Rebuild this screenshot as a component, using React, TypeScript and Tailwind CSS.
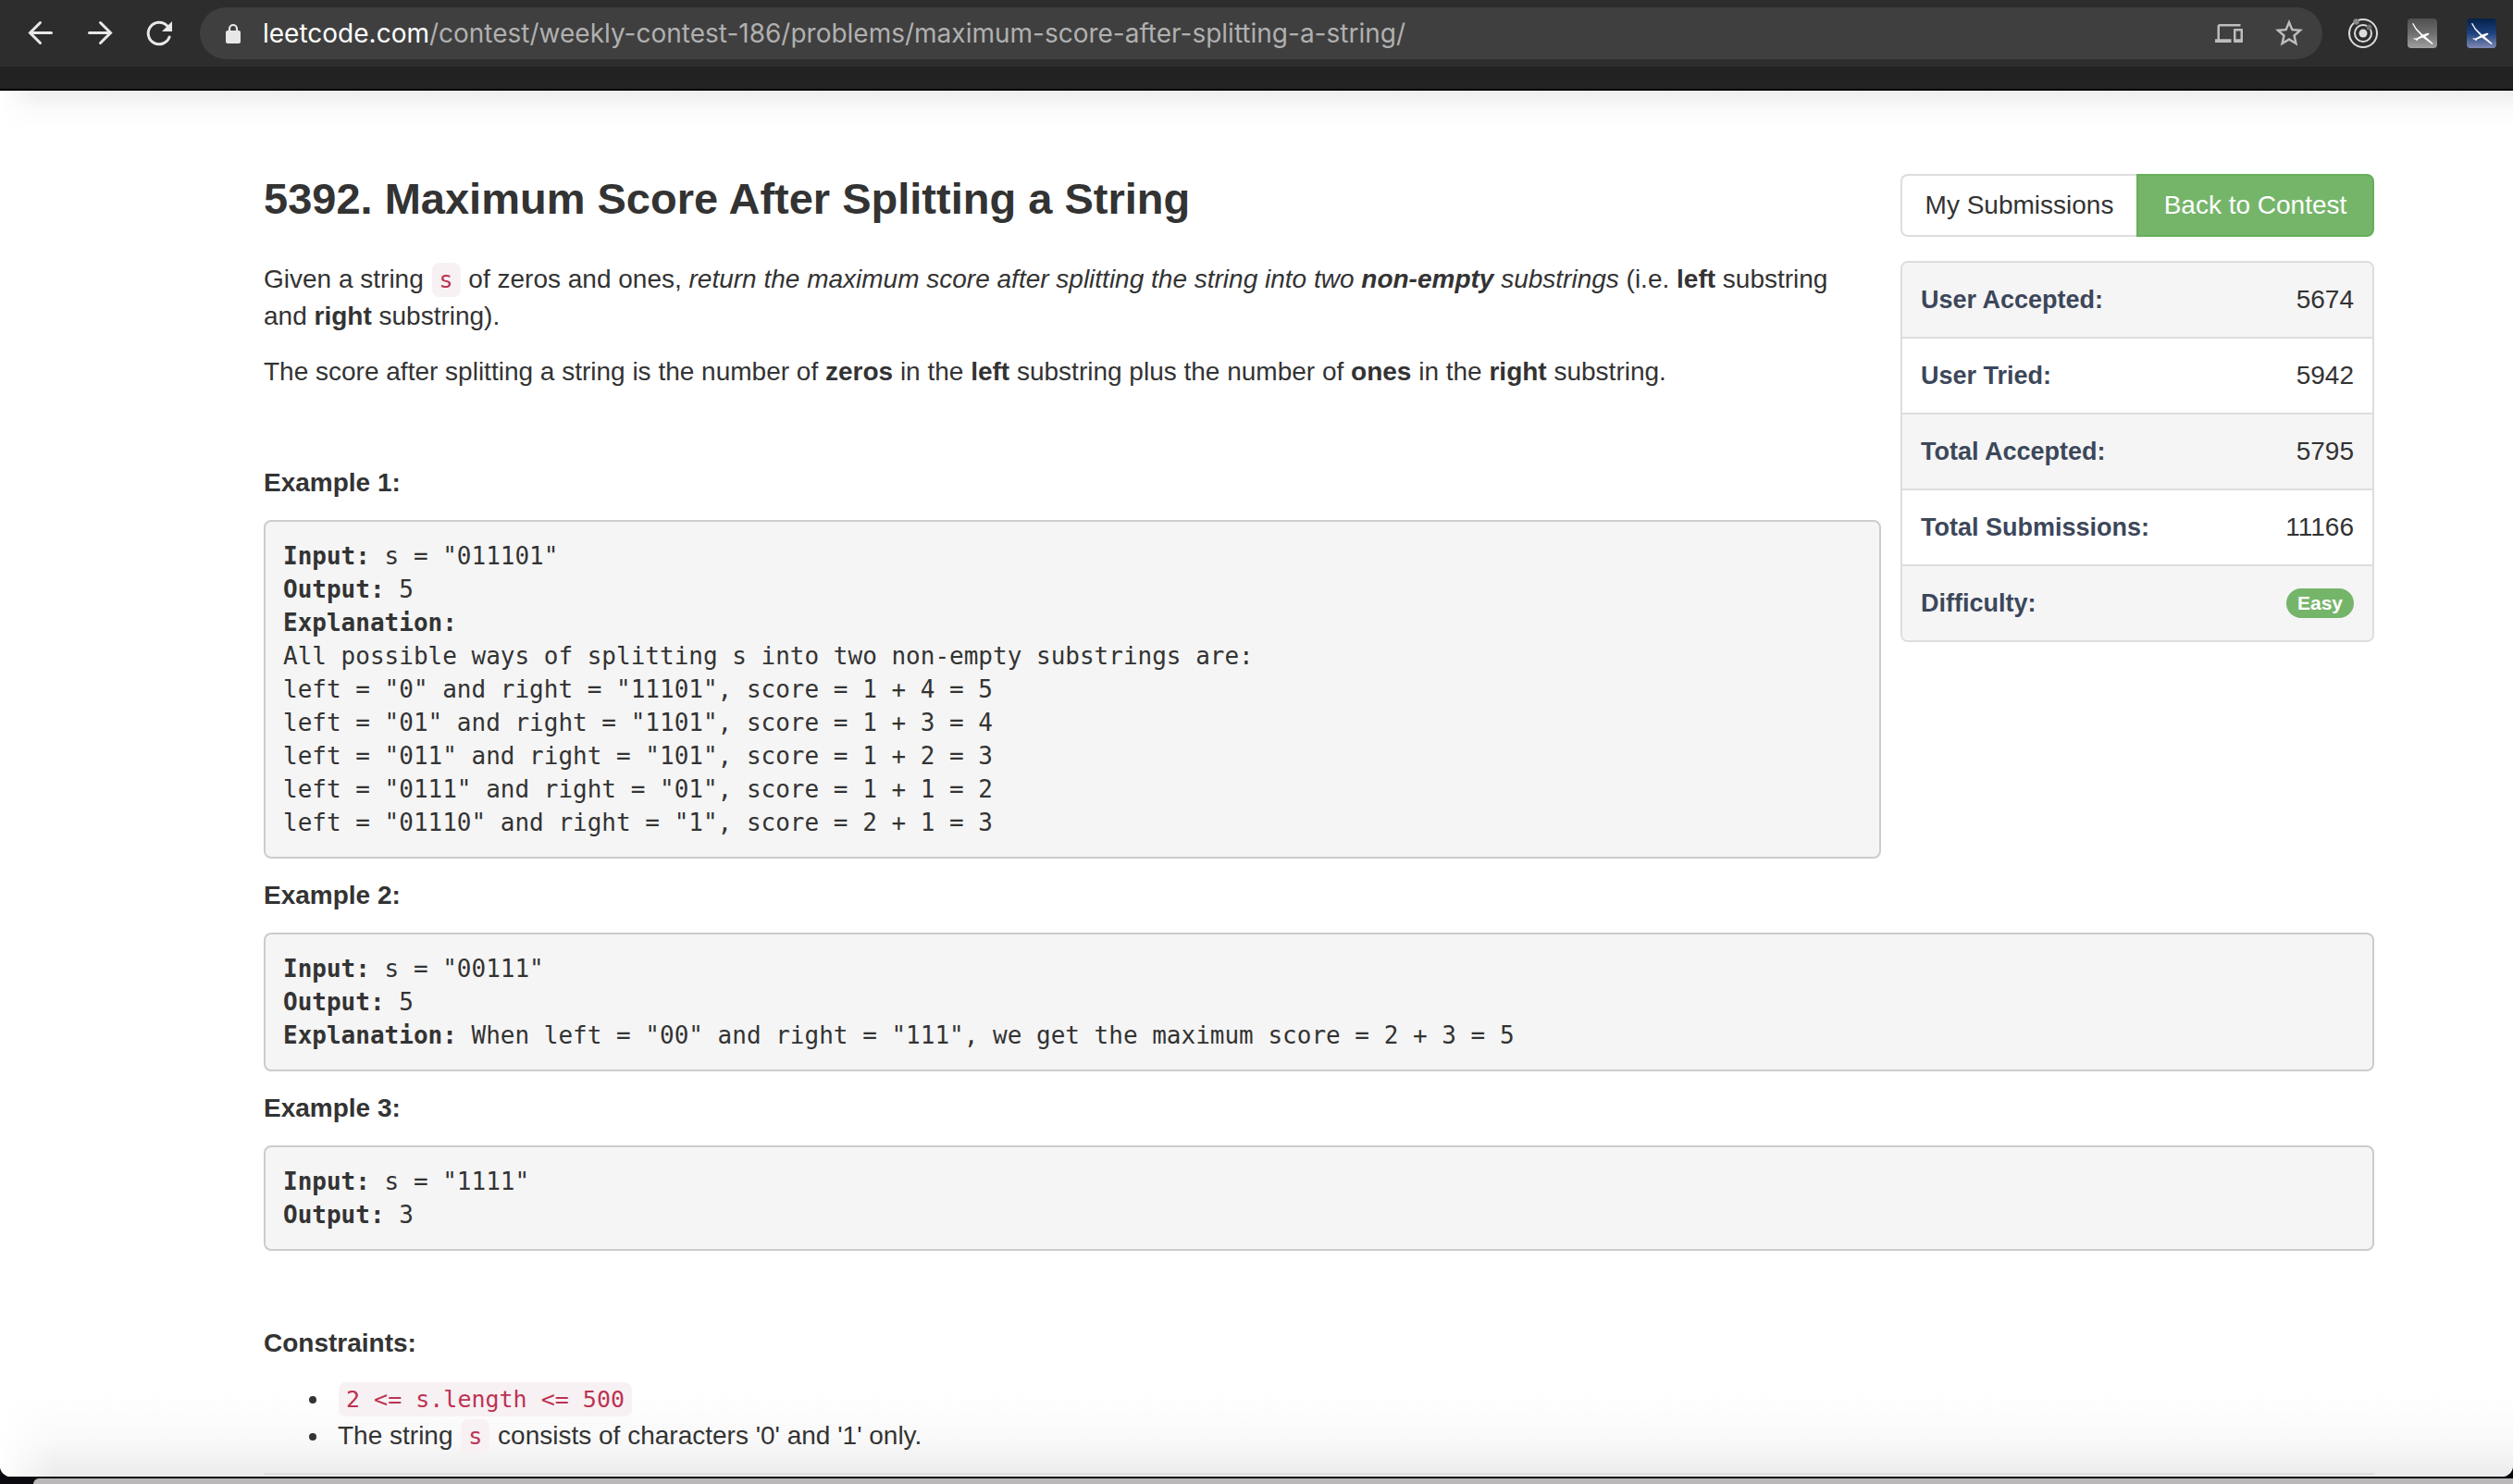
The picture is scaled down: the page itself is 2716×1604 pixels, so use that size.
import React from "react";
import { MdDevices, MdStarBorder } from "react-icons/md";

const stats: { label: string; value: string }[] = [
  { label: "User Accepted:", value: "5674" },
  { label: "User Tried:", value: "5942" },
  { label: "Total Accepted:", value: "5795" },
  { label: "Total Submissions:", value: "11166" },
];

function Code({ children }: { children: React.ReactNode }) {
  return (
    <code className="mx-px rounded-lg bg-[#f8f1f3] px-2 py-1 font-['DejaVu_Sans_Mono',monospace] text-[25px] leading-[30px] text-[#bd3353]">
      {children}
    </code>
  );
}

function Pre({ children }: { children: React.ReactNode }) {
  return (
    <pre className="mb-5 whitespace-pre-wrap rounded-lg border-2 border-[#ccc] bg-[#f5f5f5] p-[19px] font-['DejaVu_Sans_Mono',monospace] text-[26px] leading-9">
      {children}
    </pre>
  );
}

function Glider({ id, colors, label }: { id: string; colors: [string, string, string]; label: string }) {
  return (
    <button type="button" aria-label={label}>
      <svg width="32" height="32" viewBox="0 0 32 32">
        <defs>
          <linearGradient id={id} x1="0" y1="0" x2="0" y2="1">
            <stop offset="0" stopColor={colors[0]} />
            <stop offset="0.5" stopColor={colors[1]} />
            <stop offset="1" stopColor={colors[2]} />
          </linearGradient>
        </defs>
        <rect width="32" height="32" rx="4" fill={`url(#${id})`} />
        <path
          d="M5 5.500 6.200 5l3.300 5.400 7 7.200 5.300-1.800 1.700.2-.6 1.400-3.600 2.200 8.400 7.400-1 1-10.400-7.400-5 1.800-1.200 2.200-1.200-1.800-2-.2-.4-1.400 3 .2 5.400-2.800-6-6.600Z"
          fill="#fff"
        />
      </svg>
    </button>
  );
}

function Toolbar() {
  return (
    <header>
      <div className="flex h-[72px] items-center bg-[#2d2d2d] pl-[28px] pr-[18px]">
        <div className="flex gap-8 text-[#e8e8e8]">
          <button type="button" aria-label="Back">
            <svg width="32" height="32" viewBox="0 0 32 32" fill="none" stroke="currentColor" strokeWidth="3" strokeLinecap="round">
              <path d="M27.500 15.500H5M15.500 4.500 4.500 15.500l11 11" />
            </svg>
          </button>
          <button type="button" aria-label="Forward">
            <svg width="32" height="32" viewBox="0 0 32 32" fill="none" stroke="currentColor" strokeWidth="3" strokeLinecap="round">
              <path d="M4.500 15.500h22.500M16.500 4.500l11 11-11 11" />
            </svg>
          </button>
          <button type="button" aria-label="Reload">
            <svg width="32" height="32" viewBox="0 0 32 32" fill="none">
              <path d="M27.100 20A11.800 11.800 0 1 1 24.500 7.800" stroke="currentColor" strokeWidth="3" strokeLinecap="round" />
              <path d="M30 3v11H19Z" fill="currentColor" />
            </svg>
          </button>
        </div>
        <div className="ml-[28px] flex h-14 min-w-0 flex-1 items-center rounded-full bg-[#3f3f3f] pl-[27px] pr-[18px]">
          <svg className="shrink-0" width="18" height="24" viewBox="0 0 18 24">
            <rect x="1" y="9" width="16" height="14" rx="2" fill="#e8e8e8" />
            <path d="M5 10V7a4 4 0 0 1 8 0v3" fill="none" stroke="#e8e8e8" strokeWidth="2.200" />
          </svg>
          <p className="ml-[23px] min-w-0 flex-1 truncate font-[Inter,sans-serif] text-[28px] leading-10 text-[#b0b0b0]">
            <span className="text-white">leetcode.com</span>
            /contest/weekly-contest-186/problems/maximum-score-after-splitting-a-string/
          </p>
          <div className="flex items-center gap-8 text-[#bdbdbd]">
            <button type="button" aria-label="Send to your devices">
              <MdDevices size={30} />
            </button>
            <button type="button" aria-label="Bookmark this page">
              <MdStarBorder size={36} />
            </button>
          </div>
        </div>
        <div className="ml-7 flex items-center gap-8">
          <button type="button" aria-label="Orbit extension">
            <svg width="32" height="32" viewBox="0 0 32 32" fill="none">
              <circle cx="16" cy="16" r="15" stroke="#dcdcdc" strokeWidth="2" />
              <circle cx="16" cy="16" r="9" stroke="#dcdcdc" strokeWidth="2" />
              <circle cx="16" cy="16" r="4.500" fill="#dcdcdc" />
              <circle cx="8.500" cy="3.500" r="3.200" fill="#8a8a8a" />
              <circle cx="22.500" cy="9.500" r="3" fill="#6f6f6f" />
            </svg>
          </button>
          <Glider id="gray-sky" colors={["#505050", "#6e6e6e", "#a0a0a0"]} label="Glider extension" />
          <Glider id="blue-sky" colors={["#06204a", "#1d427e", "#8088b4"]} label="Glider extension (active)" />
        </div>
      </div>
      <div className="h-[26px] border-b-2 border-black bg-[#222]" />
    </header>
  );
}

export default function App() {
  return (
    <div className="min-h-screen bg-[#0a0a10]">
      <div className="overflow-hidden rounded-b-xl bg-white font-['Liberation_Sans',Arial,sans-serif] text-[28px] leading-10 text-[#333]">
        <Toolbar />
        <main className="bg-[linear-gradient(to_right,white,transparent_40px),linear-gradient(to_bottom,#eee,#fafafa_20px,white_42px)] pl-[285px] pr-[150px] pt-[90px]">
          <div className="flex gap-[21px]">
            <div className="min-w-0 flex-1">
              <h1 className="mb-10 text-[47px] font-bold leading-[54px]">5392. Maximum Score After Splitting a String</h1>
              <p className="mb-5 pr-5">
                Given a string <Code>s</Code> of zeros and ones,{" "}
                <em>
                  return the maximum score after splitting the string into two <strong>non-empty</strong> substrings
                </em>{" "}
                (i.e. <strong>left</strong> substring and <strong>right</strong> substring).
              </p>
              <p className="mb-20 pr-5">
                The score after splitting a string is the number of <strong>zeros</strong> in the <strong>left</strong>{" "}
                substring plus the number of <strong>ones</strong> in the <strong>right</strong> substring.
              </p>
              <p className="mb-5 font-bold">Example 1:</p>
              <Pre>
                <b>Input:</b>
                {' s = "011101"\n'}
                <b>Output:</b>
                {" 5\n"}
                <b>Explanation:</b>
                {`
All possible ways of splitting s into two non-empty substrings are:
left = "0" and right = "11101", score = 1 + 4 = 5
left = "01" and right = "1101", score = 1 + 3 = 4
left = "011" and right = "101", score = 1 + 2 = 3
left = "0111" and right = "01", score = 1 + 1 = 2
left = "01110" and right = "1", score = 2 + 1 = 3`}
              </Pre>
            </div>
            <aside className="w-[512px] shrink-0">
              <div className="mb-[26px] flex">
                <button type="button" className="h-[68px] flex-1 rounded-l-lg border-2 border-r-0 border-[#ddd] bg-white">
                  My Submissions
                </button>
                <button type="button" className="h-[68px] flex-1 rounded-r-lg border-2 border-[#68ae5c] bg-[#75b56a] text-white">
                  Back to Contest
                </button>
              </div>
              <dl className="divide-y-2 divide-[#ddd] overflow-hidden rounded-lg border-2 border-[#ddd]">
                {stats.map((s) => (
                  <div key={s.label} className="flex items-center justify-between px-5 py-5 odd:bg-[#f5f5f5]">
                    <dt className="text-[27px] font-bold text-[#3c475a]">{s.label}</dt>
                    <dd>{s.value}</dd>
                  </div>
                ))}
                <div className="flex items-center justify-between px-5 py-5 odd:bg-[#f5f5f5]">
                  <dt className="text-[27px] font-bold text-[#3c475a]">Difficulty:</dt>
                  <dd className="rounded-full bg-[#75b56a] px-3 text-[21px] font-bold leading-8 text-white">Easy</dd>
                </div>
              </dl>
            </aside>
          </div>
          <p className="mb-5 font-bold">Example 2:</p>
          <Pre>
            <b>Input:</b>
            {' s = "00111"\n'}
            <b>Output:</b>
            {" 5\n"}
            <b>Explanation:</b>
            {' When left = "00" and right = "111", we get the maximum score = 2 + 3 = 5'}
          </Pre>
          <p className="mb-5 font-bold">Example 3:</p>
          <Pre>
            <b>Input:</b>
            {' s = "1111"\n'}
            <b>Output:</b>
            {" 3"}
          </Pre>
          <p className="pb-5 pt-[60px] font-bold">Constraints:</p>
        </main>
        <div className="bg-[linear-gradient(to_right,white,transparent_60px),linear-gradient(to_top,#ebebeb,#f8f8f8_36px,white_90px)] pb-0.5 pl-[285px] pr-[150px]">
          <ul className="mb-5 list-disc pl-[72px]">
            <li className="pl-2">
              <Code>2 &lt;= s.length &lt;= 500</Code>
            </li>
            <li className="pl-2">
              The string <Code>s</Code> consists of characters '0' and '1' only.
            </li>
          </ul>
          <hr className="border-t-2 border-[#ddd]" />
        </div>
      </div>
      <div className="ml-9 mt-0.5 h-1.5 rounded-tl-lg bg-[#bab8b9]" />
    </div>
  );
}
